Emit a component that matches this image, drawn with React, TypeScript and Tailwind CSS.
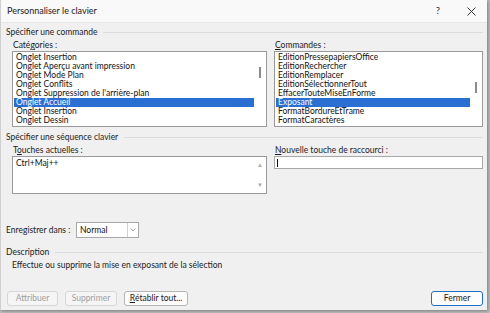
import React from 'react'

const categories = [
  'Onglet Insertion',
  'Onglet Aperçu avant impression',
  'Onglet Mode Plan',
  'Onglet Conflits',
  "Onglet Suppression de l'arrière-plan",
  'Onglet Accueil',
  'Onglet Insertion',
  'Onglet Dessin',
]

const commands = [
  'EditionPressepapiersOffice',
  'EditionRechercher',
  'EditionRemplacer',
  'EditionSélectionnerTout',
  'EffacerTouteMiseEnForme',
  'Exposant',
  'FormatBordureEtTrame',
  'FormatCaractères',
]

function GroupTitle({ label }: { label: string }) {
  return (
    <div className="flex items-center gap-[6px] h-[12px] pr-[4px]">
      <span className="text-[8.5px] leading-[12px] text-[#1b1b1b] whitespace-nowrap">{label}</span>
      <div className="flex-1 h-px bg-[#dcdcdc]" />
    </div>
  )
}

function ListBox({ items, selected, thumbTop }: { items: string[]; selected: number; thumbTop: number }) {
  return (
    <div className="relative h-[76px] border border-[#9a9a9a] bg-white pt-[1px] pl-[1px] pr-[12px] overflow-hidden">
      {items.map((it, i) => (
        <div
          key={i}
          className={`h-[9px] leading-[9px] text-[8.5px] pl-[2px] whitespace-nowrap ${
            i === selected ? 'bg-[#2a6fd2] text-white' : 'text-[#111]'
          }`}
        >
          {it}
        </div>
      ))}
      <div className="absolute right-[5px] w-[2px] h-[11px] bg-[#8a8a8a]" style={{ top: thumbTop }} />
    </div>
  )
}

export default function App() {
  return (
    <div className="w-[490px] h-[313px] bg-[#bdbdbd] overflow-hidden" style={{ fontFamily: 'Lato, "Noto Sans", sans-serif' }}>
      <div className="w-[487px] h-[310px] bg-[#f0f0f0] border-l border-[#cfcfcf] flex flex-col shadow-[1px_1px_3px_rgba(0,0,0,0.35)]">
        <div className="h-[23px] bg-[#f9f9f9] border-b border-[#e6e6e6] flex items-center pl-[6px] pr-[11px] shrink-0">
          <span className="text-[9px] text-[#1a1a1a] flex-1">Personnaliser le clavier</span>
          <span className="text-[9.5px] text-[#333] mr-[27px]">?</span>
          <svg width="9" height="9" viewBox="0 0 9 9">
            <path d="M0.5 0.5 L8.5 8.5 M8.5 0.5 L0.5 8.5" stroke="#333" strokeWidth="1" />
          </svg>
        </div>

        <div className="flex flex-col pl-[5px] pt-[3px]">
          <GroupTitle label="Spécifier une commande" />
          <div className="flex gap-[7px] pl-[6px] pr-[3px] mt-[1px]">
            <div className="w-[255px] flex flex-col">
              <div className="text-[8.5px] leading-[12px] h-[12px] pl-[1px] text-[#1b1b1b]">
                Caté<span className="underline">g</span>ories :
              </div>
              <ListBox items={categories} selected={5} thumbTop={15} />
            </div>
            <div className="w-[209px] flex flex-col">
              <div className="text-[8.5px] leading-[12px] h-[12px] pl-[1px] text-[#1b1b1b]">
                <span className="underline">C</span>ommandes :
              </div>
              <ListBox items={commands} selected={5} thumbTop={30} />
            </div>
          </div>

          <div className="mt-[4px]">
            <GroupTitle label="Spécifier une séquence clavier" />
          </div>
          <div className="flex gap-[7px] pl-[6px] pr-[3px] mt-[1px]">
            <div className="w-[255px] flex flex-col">
              <div className="text-[8.5px] leading-[12px] h-[12px] pl-[1px] text-[#1b1b1b]">
                T<span className="underline">o</span>uches actuelles :
              </div>
              <div className="relative h-[38px] border border-[#9a9a9a] bg-white">
                <div className="text-[8.5px] leading-[9px] pl-[3px] pt-[2px] text-[#111]">Ctrl+Maj++</div>
                <div className="absolute right-[3px] top-[5px] text-[6px] leading-[6px] text-[#a8a8a8]">▲</div>
                <div className="absolute right-[3px] bottom-[5px] text-[6px] leading-[6px] text-[#a8a8a8]">▼</div>
              </div>
            </div>
            <div className="w-[209px] flex flex-col">
              <div className="text-[8.5px] leading-[12px] h-[12px] pl-[1px] text-[#1b1b1b]">
                <span className="underline">N</span>ouvelle touche de raccourci :
              </div>
              <div className="h-[13px] border border-[#a8a8a8] bg-white flex items-center pl-[2px]">
                <div className="w-px h-[8px] bg-[#111]" />
              </div>
            </div>
          </div>

          <div className="flex items-center mt-[28px] h-[16px]">
            <span className="text-[8.5px] text-[#1b1b1b] w-[70px] whitespace-nowrap">
              Enre<span className="underline">g</span>istrer dans :
            </span>
            <div className="w-[63px] h-[16px] border border-[#a8a8a8] bg-white flex items-center">
              <span className="flex-1 text-[8.5px] pl-[3px] text-[#111]">Normal</span>
              <div className="w-[11px] h-full border-l border-[#d0d0d0] flex items-center justify-center">
                <svg width="6" height="4" viewBox="0 0 6 4">
                  <path d="M0.5 0.5 L3 3 L5.5 0.5" stroke="#888" strokeWidth="0.8" fill="none" />
                </svg>
              </div>
            </div>
          </div>

          <div className="mt-[8px]">
            <GroupTitle label="Description" />
          </div>
          <div className="text-[8.5px] leading-[12px] pl-[6px] mt-[1px] text-[#1b1b1b]">
            Effectue ou supprime la mise en exposant de la sélection
          </div>

          <div className="flex items-center mt-[20px] pr-[4px]">
            <div className="flex gap-[7px] flex-1 pl-[1px]">
              <div className="w-[51px] h-[15px] border border-[#d6d6d6] rounded-[3px] bg-[#f5f5f5] text-[8.5px] text-[#a0a0a0] flex items-center justify-center">
                Attribuer
              </div>
              <div className="w-[52px] h-[15px] border border-[#d6d6d6] rounded-[3px] bg-[#f5f5f5] text-[8.5px] text-[#a0a0a0] flex items-center justify-center">
                Supprimer
              </div>
              <div className="w-[64px] h-[15px] border border-[#b5b5b5] rounded-[3px] bg-[#fcfcfc] text-[8.5px] text-[#1b1b1b] flex items-center justify-center">
                <span className="underline">R</span>établir tout...
              </div>
            </div>
            <div className="w-[52px] h-[15px] border border-[#1f6fc5] rounded-[3px] bg-[#fdfdfd] text-[8.5px] text-[#1b1b1b] flex items-center justify-center">
              Fermer
            </div>
          </div>
        </div>
      </div>
    </div>
  )
}
